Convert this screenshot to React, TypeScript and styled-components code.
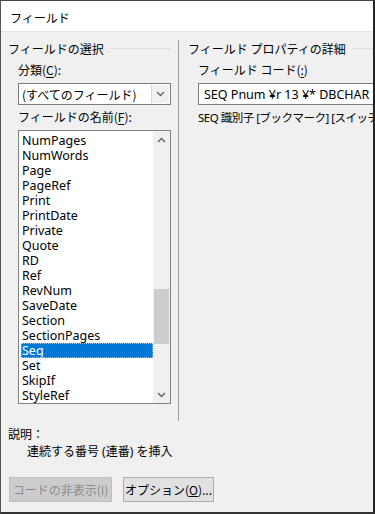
import React from "react";
import styled, { createGlobalStyle } from "styled-components";

const GlobalStyle = createGlobalStyle`
  html, body {
    margin: 0;
    padding: 0;
    background: #f0f0f0;
  }
  body {
    font-family: "Noto Sans", "Noto Sans CJK JP", sans-serif;
    font-size: 12px;
    color: #000;
  }
`;

const fields = [
  "NumPages",
  "NumWords",
  "Page",
  "PageRef",
  "Print",
  "PrintDate",
  "Private",
  "Quote",
  "RD",
  "Ref",
  "RevNum",
  "SaveDate",
  "Section",
  "SectionPages",
  "Seq",
  "Set",
  "SkipIf",
  "StyleRef",
];

const Chevron = ({ up, color = "#606060" }: { up?: boolean; color?: string }) => (
  <svg width="9" height="6" viewBox="0 0 9 6">
    <path
      d={up ? "M1 5 L4.5 1.5 L8 5" : "M1 1 L4.5 4.5 L8 1"}
      fill="none"
      stroke={color}
      strokeWidth="1.3"
    />
  </svg>
);

export default function App() {
  return (
    <>
      <GlobalStyle />
      <Window>
        <TitleBar>フィールド</TitleBar>
        <Body>
          <Columns>
            <LeftPane>
              <GroupTitle>
                <span>フィールドの選択</span>
                <GroupLine />
              </GroupTitle>
              <Label>
                分類(<u>C</u>):
              </Label>
              <Combo>
                <ComboText>(すべてのフィールド)</ComboText>
                <ComboButton>
                  <Chevron />
                </ComboButton>
              </Combo>
              <Label $gap={4}>
                フィールドの名前(<u>F</u>):
              </Label>
              <ListBox>
                <Items>
                  {fields.map((f) => (
                    <Item key={f} $selected={f === "Seq"}>
                      {f}
                    </Item>
                  ))}
                </Items>
                <ScrollBar>
                  <ArrowCell>
                    <Chevron up />
                  </ArrowCell>
                  <Track>
                    <Thumb />
                  </Track>
                  <ArrowCell>
                    <Chevron />
                  </ArrowCell>
                </ScrollBar>
              </ListBox>
            </LeftPane>
            <Divider />
            <RightPane>
              <GroupTitle>
                <span>フィールド プロパティの詳細</span>
                <GroupLine />
              </GroupTitle>
              <Label>
                フィールド コード(<u>:</u>)
              </Label>
              <TextBox>SEQ Pnum ¥r 13 ¥* DBCHAR</TextBox>
              <Syntax>SEQ 識別子 [ブックマーク] [スイッチ]</Syntax>
            </RightPane>
          </Columns>
          <Description>
            <div>説明：</div>
            <DescText>連続する番号 (連番) を挿入</DescText>
          </Description>
          <Buttons>
            <Button disabled>コードの非表示(I)</Button>
            <Button $width={91}>
              オプション(<u>O</u>)...
            </Button>
          </Buttons>
        </Body>
      </Window>
    </>
  );
}

const Window = styled.div`
  width: 375px;
  height: 514px;
  box-sizing: border-box;
  border-top: 1px solid #444;
  border-left: 1px solid #555;
  border-right: 2px solid #222;
  border-bottom: 2px solid #333;
  display: flex;
  flex-direction: column;
  overflow: hidden;
  background: #f0f0f0;
`;

const TitleBar = styled.div`
  height: 31px;
  flex: none;
  box-sizing: border-box;
  background: #fff;
  border-bottom: 1px solid #e3e3e3;
  padding: 2px 0 0 9px;
  display: flex;
  align-items: center;
  font-family: "Noto Sans CJK JP", sans-serif;
  font-size: 12px;
  color: #000;
`;

const Body = styled.div`
  flex: 1;
  display: flex;
  flex-direction: column;
  padding: 8px 0 0 7px;
`;

const Columns = styled.div`
  display: flex;
  height: 381px;
`;

const LeftPane = styled.div`
  width: 163px;
  display: flex;
  flex-direction: column;
`;

const RightPane = styled.div`
  flex: 1;
  display: flex;
  flex-direction: column;
  padding-left: 9px;
  min-width: 0;
`;

const Divider = styled.div`
  width: 1px;
  background: #a0a0a0;
  margin-left: 7px;
`;

const GroupTitle = styled.div`
  display: flex;
  align-items: center;
  gap: 6px;
  height: 16px;
  font-family: "Noto Sans CJK JP", sans-serif;
  white-space: nowrap;
`;

const GroupLine = styled.div`
  flex: 1;
  height: 1px;
  background: #dcdcdc;
`;

const Label = styled.div<{ $gap?: number }>`
  font-family: "Noto Sans CJK JP", sans-serif;
  margin: ${(p) => p.$gap ?? 6}px 0 0 10px;
  height: 16px;
  line-height: 16px;
  white-space: nowrap;
  u {
    text-decoration-thickness: 1px;
    text-underline-offset: 2px;
  }
`;

const Combo = styled.div`
  margin: 5px 0 0 10px;
  height: 22px;
  box-sizing: border-box;
  border: 1px solid #7a7a7a;
  background: #fff;
  display: flex;
  align-items: stretch;
`;

const ComboText = styled.div`
  flex: 1;
  padding-left: 3px;
  display: flex;
  align-items: center;
  font-family: "Noto Sans CJK JP", sans-serif;
`;

const ComboButton = styled.div`
  width: 17px;
  margin: 1px;
  background: #f0f0f0;
  border-left: 1px solid #dadada;
  display: flex;
  align-items: center;
  justify-content: center;
`;

const ListBox = styled.div`
  margin: 5px 0 0 10px;
  height: 274px;
  box-sizing: border-box;
  border: 1px solid #828282;
  background: #fff;
  display: flex;
`;

const Items = styled.div`
  flex: 1;
  padding: 2px 0 0 2px;
  overflow: hidden;
`;

const Item = styled.div<{ $selected?: boolean }>`
  height: 15px;
  line-height: 15px;
  padding-left: 1px;
  box-sizing: border-box;
  font-family: "Noto Sans", sans-serif;
  font-size: 12.5px;
  white-space: nowrap;
  background: ${(p) => (p.$selected ? "#0078d7" : "transparent")};
  color: ${(p) => (p.$selected ? "#fff" : "#000")};
  outline: ${(p) => (p.$selected ? "1px dotted #9cc7ee" : "none")};
  outline-offset: -1px;
`;

const ScrollBar = styled.div`
  width: 17px;
  background: #f0f0f0;
  display: flex;
  flex-direction: column;
`;

const ArrowCell = styled.div`
  height: 17px;
  display: flex;
  align-items: center;
  justify-content: center;
`;

const Track = styled.div`
  flex: 1;
  padding-top: 141px;
  display: flex;
  flex-direction: column;
  align-items: center;
`;

const Thumb = styled.div`
  width: 15px;
  height: 55px;
  background: #cdcdcd;
`;

const TextBox = styled.div`
  margin: 5px 0 0 10px;
  height: 22px;
  box-sizing: border-box;
  border: 1px solid #7a7a7a;
  border-right: none;
  background: #fff;
  padding-left: 5px;
  display: flex;
  align-items: center;
  font-family: "Noto Sans", "Noto Sans CJK JP", sans-serif;
  font-size: 12.5px;
  white-space: nowrap;
  overflow: hidden;
`;

const Syntax = styled.div`
  margin: 4px 0 0 10px;
  font-family: "Noto Sans", "Noto Sans CJK JP", sans-serif;
  font-size: 11.5px;
  letter-spacing: -0.5px;
  white-space: nowrap;
  overflow: hidden;
`;

const Description = styled.div`
  margin-top: 4px;
  font-family: "Noto Sans CJK JP", sans-serif;
  line-height: 18px;
`;

const DescText = styled.div`
  padding-left: 19px;
  font-family: "Noto Sans", "Noto Sans CJK JP", sans-serif;
`;

const Buttons = styled.div`
  display: flex;
  gap: 11px;
  margin-top: 16px;
  padding-left: 1px;
`;

const Button = styled.button<{ $width?: number }>`
  width: ${(p) => p.$width ?? 103}px;
  height: 25px;
  box-sizing: border-box;
  border: 1px solid #adadad;
  background: #e1e1e1;
  font-family: "Noto Sans CJK JP", sans-serif;
  font-size: 12px;
  color: #000;
  padding: 0;
  white-space: nowrap;
  &:disabled {
    background: #cccccc;
    border-color: #bfbfbf;
    color: #8a8a8a;
  }
`;
